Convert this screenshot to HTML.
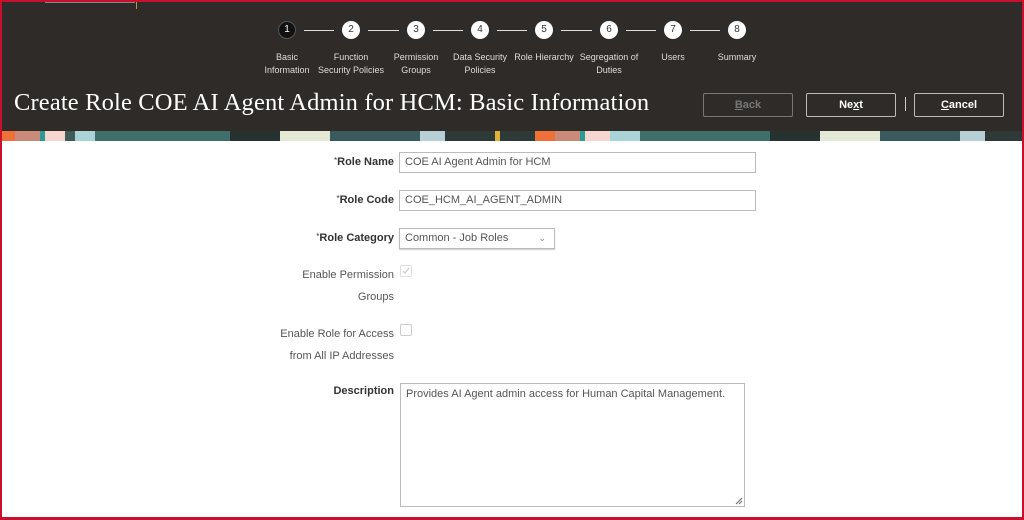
<!DOCTYPE html>
<html><head><style>
*{margin:0;padding:0;box-sizing:border-box}
body{width:1024px;height:520px;overflow:hidden;background:#fff;font-family:"Liberation Sans",sans-serif;position:relative}
.frame{position:absolute;left:0;top:0;width:1024px;height:520px;border:2px solid #c8102e;border-bottom-width:3px;z-index:10;pointer-events:none}
.hdr{position:absolute;left:0;top:0;width:1024px;height:132px;background:#2f2b28}
.strip{position:absolute;left:0;top:131px;width:1024px;height:10px;background:linear-gradient(90deg,#f0703a 0,#f0703a 15px,#c98a78 15px,#c98a78 40px,#2e9a96 40px,#2e9a96 45px,#f6d6cf 45px,#f6d6cf 65px,#3f5a58 65px,#3f5a58 75px,#a9d3d9 75px,#a9d3d9 95px,#3f6f6b 95px,#3f6f6b 230px,#25322f 230px,#25322f 280px,#e4e9d6 280px,#e4e9d6 330px,#3a5b5d 330px,#3a5b5d 420px,#b7cfd6 420px,#b7cfd6 445px,#2d3a37 445px,#2d3a37 495px,#e0b23c 495px,#e0b23c 500px,#2d3a37 500px,#2d3a37 535px,#f0703a 535px,#f0703a 555px,#c98a78 555px,#c98a78 580px,#2e9a96 580px,#2e9a96 585px,#f6d6cf 585px,#f6d6cf 610px,#a9d3d9 610px,#a9d3d9 640px,#3f6f6b 640px,#3f6f6b 770px,#25322f 770px,#25322f 820px,#e4e9d6 820px,#e4e9d6 880px,#3a5b5d 880px,#3a5b5d 960px,#b7cfd6 960px,#b7cfd6 985px,#2d3a37 985px)}
.step{position:absolute;top:21px;width:18px;height:18px;border-radius:50%;background:#fff;color:#333;font-size:10px;text-align:center;line-height:18px;margin-left:-9px}
.step.cur{background:#111;color:#fff;border:1px solid #555;line-height:16px}
.line{position:absolute;top:30px;height:1px;background:#ddd}
.lbl{position:absolute;top:51px;width:90px;margin-left:-45px;text-align:center;color:#ddd;font-size:9px;line-height:12.5px}
h1{position:absolute;left:14px;top:89px;font-family:"Liberation Serif",serif;font-weight:normal;font-size:24.5px;color:#fff;white-space:nowrap;letter-spacing:0.15px}
.btn{position:absolute;top:93px;height:24px;width:90px;border:1px solid #bbb;border-radius:2px;color:#fff;font-size:11px;font-weight:bold;text-align:center;line-height:22px}
.fl{position:absolute;right:630px;font-size:11px;color:#333;text-align:right;white-space:nowrap}
.fl b{font-weight:bold}
.fl.g{color:#555;line-height:22px}
.req{font-size:8px;vertical-align:top;color:#333}
.in{position:absolute;left:399px;height:21px;border:1px solid #bbb;font-size:11px;color:#555;padding-left:5px;line-height:19px}
.cb{position:absolute;left:400px;width:12px;height:12px;border:1px solid #ccc;border-radius:2px}
</style></head><body>
<div class="hdr"></div>
<div class="strip"></div>
<div style="position:absolute;left:45px;top:0;width:90px;height:3px;background:#8a8480"></div>
<div style="position:absolute;left:136px;top:0;width:1px;height:9px;background:#b89a3a"></div>
<div class="line" style="left:304px;width:30px"></div>
<div class="line" style="left:368px;width:31px"></div>
<div class="line" style="left:433px;width:30px"></div>
<div class="line" style="left:497px;width:30px"></div>
<div class="line" style="left:561px;width:31px"></div>
<div class="line" style="left:626px;width:30px"></div>
<div class="line" style="left:690px;width:30px"></div>
<div class="step cur" style="left:287px">1</div>
<div class="step" style="left:351px">2</div>
<div class="step" style="left:416px">3</div>
<div class="step" style="left:480px">4</div>
<div class="step" style="left:544px">5</div>
<div class="step" style="left:609px">6</div>
<div class="step" style="left:673px">7</div>
<div class="step" style="left:737px">8</div>
<div class="lbl" style="left:287px">Basic<br>Information</div>
<div class="lbl" style="left:351px">Function<br>Security Policies</div>
<div class="lbl" style="left:416px">Permission<br>Groups</div>
<div class="lbl" style="left:480px">Data Security<br>Policies</div>
<div class="lbl" style="left:544px">Role Hierarchy</div>
<div class="lbl" style="left:609px">Segregation of<br>Duties</div>
<div class="lbl" style="left:673px">Users</div>
<div class="lbl" style="left:737px">Summary</div>
<h1>Create Role COE AI Agent Admin for HCM: Basic Information</h1>
<div class="btn" style="left:703px;color:#777;border-color:#777"><u>B</u>ack</div>
<div class="btn" style="left:806px">Ne<u>x</u>t</div>
<div style="position:absolute;left:905px;top:97px;width:1px;height:14px;background:#ccc"></div>
<div class="btn" style="left:914px"><u>C</u>ancel</div>

<div class="fl" style="top:156px"><span class="req">*</span><b>Role Name</b></div>
<div class="in" style="top:152px;width:357px">COE AI Agent Admin for HCM</div>
<div class="fl" style="top:194px"><span class="req">*</span><b>Role Code</b></div>
<div class="in" style="top:190px;width:357px">COE_HCM_AI_AGENT_ADMIN</div>
<div class="fl" style="top:232px"><span class="req">*</span><b>Role Category</b></div>
<div class="in" style="top:228px;width:156px;box-shadow:0 1px 1px #ccc">Common - Job Roles<span style="position:absolute;right:8px;top:0;color:#888;font-size:9px">&#8964;</span></div>
<div class="fl g" style="top:264px">Enable Permission<br>Groups</div>
<div class="cb" style="top:265px;border-color:#ddd"><svg width="10" height="10" style="position:absolute;left:0;top:0"><path d="M2 5l2 2 4-5" stroke="#ccc" stroke-width="1.3" fill="none"/></svg></div>
<div class="fl g" style="top:323px">Enable Role for Access<br>from All IP Addresses</div>
<div class="cb" style="top:324px"></div>
<div class="fl" style="top:385px"><b>Description</b></div>
<div class="in" style="top:383px;left:400px;width:345px;height:124px;padding-top:4px;line-height:13px">Provides AI Agent admin access for Human Capital Management.
<svg width="8" height="8" style="position:absolute;right:1px;bottom:1px"><path d="M7 1L1 7M7 4L4 7" stroke="#666" stroke-width="1"/></svg></div>
<div class="frame"></div>
</body></html>
